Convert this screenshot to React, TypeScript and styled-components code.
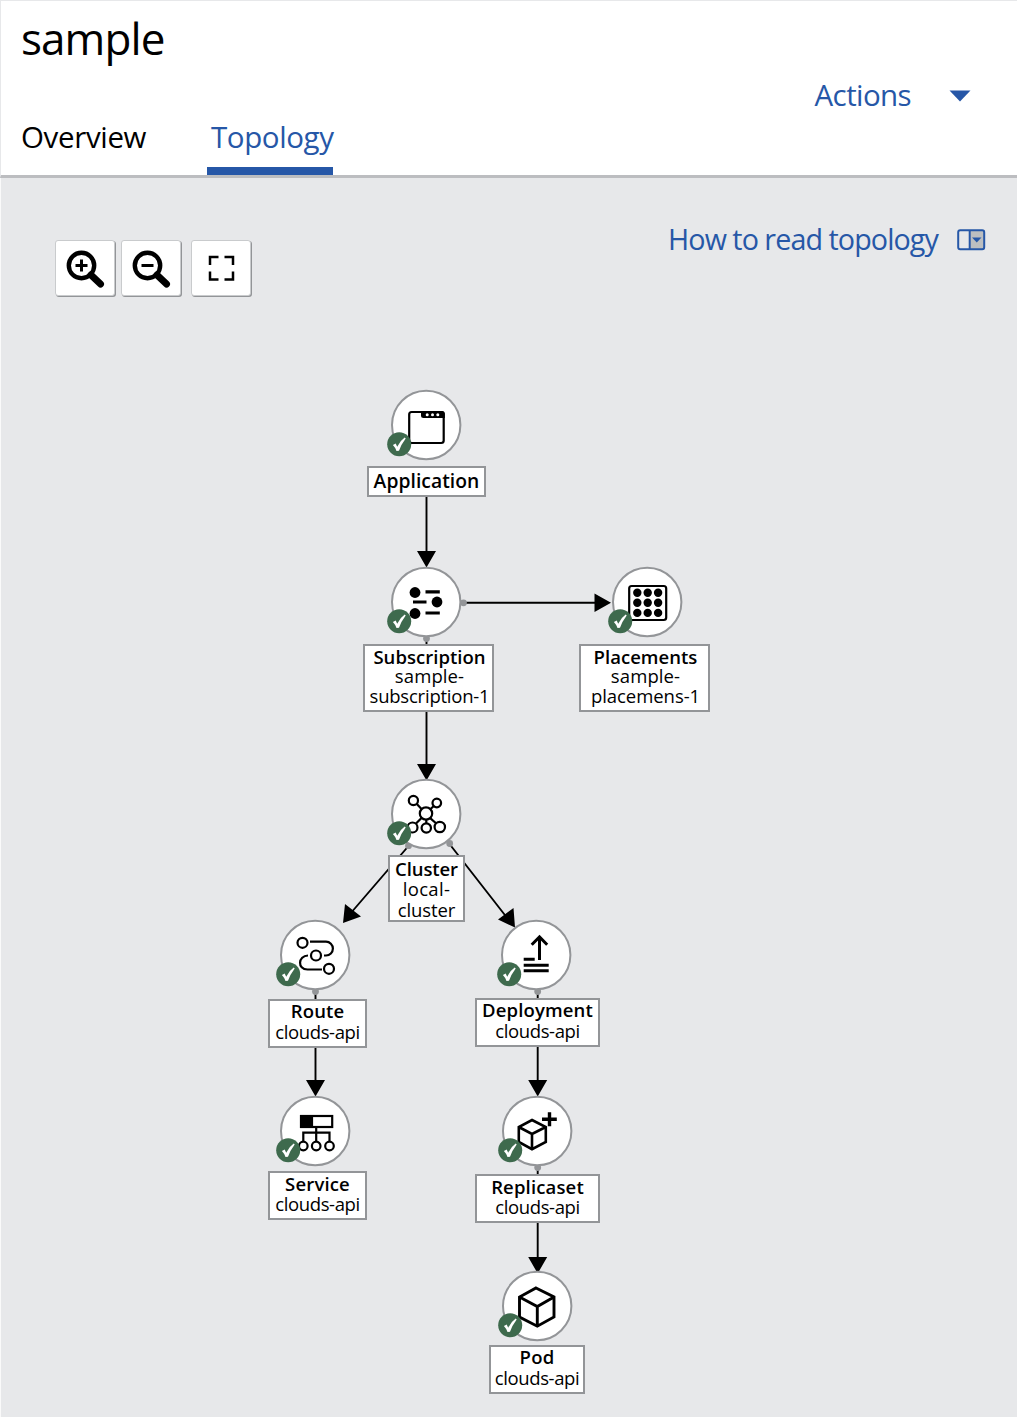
import React from 'react';
import styled, { createGlobalStyle } from 'styled-components';

const blue = '#2657a7';
const canvas = '#e7e8ea';
const rim = '#939598';
const green = '#3e6a4d';

const GlobalStyle = createGlobalStyle`
  * { box-sizing: border-box; }
  body { margin: 0; background: #fff; }
`;

const Page = styled.div`
  width: 1017px;
  height: 1418px;
  display: flex;
  flex-direction: column;
  font-family: 'Open Sans', 'Noto Sans', sans-serif;
  color: #000;
  overflow: hidden;
`;

const Header = styled.header`
  height: 178px;
  display: flex;
  justify-content: space-between;
  background: #fff;
  border-top: 1px solid ${canvas};
  border-left: 1px solid ${canvas};
  border-bottom: 3px solid #bcbdc0;
  padding: 5px 46px 0 20px;
`;

const HeadLeft = styled.div`
  display: flex;
  flex-direction: column;
`;

const Text = styled.span<{ $ls?: number; $ws?: number }>`
  letter-spacing: ${(p) => p.$ls ?? 0}px;
  word-spacing: ${(p) => p.$ws ?? 0}px;
  white-space: nowrap;
`;

const Title = styled.h1`
  margin: 0;
  font-weight: 400;
  font-size: 44px;
  line-height: 65px;
  height: 100px;
`;

const Tabs = styled.nav`
  display: flex;
  gap: 60px;
`;

const Tab = styled.a<{ $active?: boolean }>`
  height: 70px;
  width: 126px;
  padding-left: ${(p) => (p.$active ? 4 : 0)}px;
  font-size: 29.5px;
  line-height: 63px;
  white-space: nowrap;
  color: ${(p) => (p.$active ? blue : '#000')};
  box-shadow: ${(p) => (p.$active ? `inset 0 -8px ${blue}` : 'none')};
`;

const Actions = styled.button`
  display: flex;
  align-items: center;
  gap: 38px;
  align-self: flex-start;
  margin-top: 66px;
  height: 44px;
  padding: 0;
  border: 0;
  background: none;
  font: inherit;
  font-size: 29.5px;
  color: ${blue};
  svg { margin-top: 3px; }
`;

const Canvas = styled.main`
  position: relative;
  flex: none;
  height: 1239px;
  background: ${canvas};
  box-shadow: inset 1px 0 #fafafa;
`;

const TopRow = styled.div`
  display: flex;
  justify-content: space-between;
  padding: 38px 31px 0 55px;
`;

const Tools = styled.div`
  display: flex;
  padding-top: 24px;
  gap: 6px;
`;

const Tool = styled.button<{ $gap?: number }>`
  width: 60px;
  height: 56px;
  margin-left: ${(p) => p.$gap ?? 0}px;
  padding: 0;
  background: #fff;
  border: 1px solid #c9cbcd;
  border-radius: 3px;
  box-shadow: 1px 1px 0 #939598;
  svg { display: block; }
`;

const HelpLink = styled.a`
  display: flex;
  align-items: center;
  gap: 19px;
  height: 46px;
  font-size: 28.7px;
  line-height: 40px;
  color: ${blue};
  svg { margin-top: 1px; }
`;

const Edges = styled.svg`
  position: absolute;
  left: 0;
  top: -178px;
`;

const NodeIcon = styled.svg<{ $x: number; $y: number }>`
  position: absolute;
  left: ${(p) => p.$x - 41}px;
  top: ${(p) => p.$y - 36 - 178}px;
`;

const Label = styled.div<{ $x: number; $y: number; $w: number; $h: number; $lh: number; $pt: number; $pl: number }>`
  position: absolute;
  left: ${(p) => p.$x}px;
  top: ${(p) => p.$y - 178}px;
  width: ${(p) => p.$w}px;
  height: ${(p) => p.$h}px;
  padding-top: ${(p) => p.$pt}px;
  padding-left: ${(p) => p.$pl}px;
  display: flex;
  flex-direction: column;
  align-items: center;
  background: #fff;
  border: 2px solid ${rim};
  font-size: 18.5px;
  line-height: ${(p) => p.$lh}px;
`;

const Name = styled(Text)<{ $size?: number }>`
  font-weight: 600;
  font-size: ${(p) => p.$size ?? 18.5}px;
`;

const stroke = { fill: 'none', stroke: '#000', strokeWidth: 2.2 } as const;

const icons: Record<string, React.ReactNode> = {
  application: (
    <g>
      <rect x="-16.800" y="-13" width="34.500" height="31" rx="2.500" {...stroke} />
      <path d="M-5-14H16Q18.800-14 18.800-11V-7H-2.500Q-5-7-5-9.500Z" />
      <g fill="#fff"><circle cx="1.200" cy="-10.300" r="1.500" /><circle cx="6.500" cy="-10.300" r="1.500" /><circle cx="11.800" cy="-10.300" r="1.500" /></g>
    </g>
  ),
  subscription: (
    <g>
      <circle cx="-11" cy="-9.500" r="5.400" /><circle cx="11" cy="0" r="5.400" /><circle cx="-11" cy="11.500" r="5.400" />
      <path d="M-.5-10.200H13.800M-13 0H.5M-.5 11H13.800" stroke="#000" strokeWidth="3.200" />
    </g>
  ),
  placements: (
    <g>
      <rect x="-17.800" y="-16" width="37" height="34" rx="2.500" {...stroke} />
      {[-9.3, 0.7, 10.9].map((y) => [-9.7, 0.7, 11.1].map((x) => <circle key={`${x}${y}`} cx={x} cy={y} r="4.200" />))}
    </g>
  ),
  cluster: (
    <g {...stroke}>
      <circle cx="0" cy="-.5" r="6.200" /><circle cx="-12.600" cy="-13.500" r="4.600" /><circle cx="10.800" cy="-11" r="4.300" />
      <circle cx="-13.500" cy="13.500" r="5" /><circle cx=".3" cy="14" r="4.700" /><circle cx="13.800" cy="13" r="5.200" />
      <path d="M-9.400-10.200-4.500-5M7.800-8 4.300-4.800M-4.500 4-10 9.500M.3 6V9M4.200 4.200 10.300 9.500" />
    </g>
  ),
  route: (
    <g {...stroke}>
      <circle cx="-12.500" cy="-12.200" r="5" /><circle cx="1" cy=".5" r="5" /><circle cx="14" cy="13.800" r="5" />
      <path d="M-5-13.300H11A6.900 6.900 0 0 1 11 .5H9M-7 .5C-17 .5-18 14.500-7.500 14.500H7" />
    </g>
  ),
  deployment: (
    <path d="M3.500 5V-18M-4.300-10.200 3.500-18 11.200-10.200M-12.300 4.200H-1.300M-12.300 10.200H12.700M-12.300 15.700H12.700" fill="none" stroke="#000" strokeWidth="3" />
  ),
  service: (
    <g {...stroke}>
      <rect x="-13.800" y="-15" width="31" height="11" /><path d="M-14-15H-3V-4H-14Z" fill="#000" />
      <path d="M1.200-3V10M-11.700 11V1.700H14.500V11" />
      <circle cx="-11.700" cy="15" r="4.300" /><circle cx="1.200" cy="15" r="4.300" /><circle cx="14.500" cy="15" r="4.300" />
    </g>
  ),
  replicaset: (
    <g fill="none" stroke="#000">
      <path d="M-5-11 8.800-4V11L-5 18.200-18.200 11V-4ZM-18.200-4-5 3 8.800-4M-5 3V18" strokeWidth="2.600" />
      <path d="M12.500-18.800V-4.800M5-11.700H19.800" strokeWidth="3.400" />
    </g>
  ),
  pod: (
    <path d="M-1-18 17-9V11L.3 20.200-17.500 11V-9ZM-17.500-9 .3.500 17-9M.3.500V20.200" fill="none" stroke="#000" strokeWidth="2.900" />
  ),
};

type Line = [string, number];
interface NodeData {
  icon: string;
  x: number;
  y: number;
  box: [number, number, number, number];
  lh: number;
  pt: number;
  pl?: number;
  size?: number;
  name: Line;
  lines: Line[];
}

const nodes: NodeData[] = [
  { icon: 'application', x: 426, y: 425, box: [367, 466, 119, 31], lh: 20, pt: 3, size: 19.3, name: ['Application', 0.05], lines: [] },
  { icon: 'subscription', x: 426, y: 602, box: [363, 644, 131, 68], lh: 19.4, pt: 1, pl: 2, name: ['Subscription', 0.03], lines: [['sample-', 0.1], ['subscription-1', -0.22]] },
  { icon: 'placements', x: 647, y: 602, box: [579, 644, 131, 68], lh: 19.4, pt: 1, pl: 2, name: ['Placements', 0.03], lines: [['sample-', 0.1], ['placemens-1', -0.05]] },
  { icon: 'cluster', x: 426, y: 814, box: [388, 855, 77, 67], lh: 20.4, pt: 2, name: ['Cluster', -0.1], lines: [['local-', 0.3], ['cluster', -0.1]] },
  { icon: 'route', x: 315, y: 955, box: [268, 999, 99, 49], lh: 20.5, pt: 0, name: ['Route', 0.1], lines: [['clouds-api', -0.38]] },
  { icon: 'deployment', x: 536, y: 955, box: [475, 998, 125, 49], lh: 20.5, pt: 0, name: ['Deployment', 0.15], lines: [['clouds-api', -0.38]] },
  { icon: 'service', x: 315, y: 1131, box: [268, 1171, 99, 49], lh: 20, pt: 1, name: ['Service', 0.15], lines: [['clouds-api', -0.38]] },
  { icon: 'replicaset', x: 537, y: 1131, box: [475, 1174, 125, 49], lh: 20, pt: 1, name: ['Replicaset', 0.15], lines: [['clouds-api', -0.38]] },
  { icon: 'pod', x: 537, y: 1306, box: [489, 1345, 96, 49], lh: 20.5, pt: 0, name: ['Pod', 0.2], lines: [['clouds-api', -0.38]] },
];

function TopologyNode({ node }: { node: NodeData }) {
  const [bx, by, bw, bh] = node.box;
  return (
    <>
      <NodeIcon $x={node.x} $y={node.y} width="78" height="72" viewBox="-41 -36 78 72">
        <circle cx=".2" r="34.200" fill="#fff" stroke={rim} strokeWidth="2" />
        {icons[node.icon]}
        <circle cx="-26.800" cy="19.200" r="12" fill={green} />
        <path transform="translate(-26.800 19.200)" d="M-6.300.7-3.500-.6-2 2.500Q1-3.500 5.500-6.600L6.500-5.800Q2 0-.2 6.600L-2.700 6.800Q-4 3-6.300.7Z" fill="#fff" />
      </NodeIcon>
      <Label $x={bx} $y={by} $w={bw} $h={bh} $lh={node.lh} $pt={node.pt} $pl={node.pl ?? 0}>
        <Name $ls={node.name[1]} $size={node.size}>{node.name[0]}</Name>
        {node.lines.map(([t, ls]) => <Text key={t} $ls={ls}>{t}</Text>)}
      </Label>
    </>
  );
}

export default function App() {
  return (
    <Page>
      <GlobalStyle />
      <Header>
        <HeadLeft>
          <Title><Text $ls={-0.9}>sample</Text></Title>
          <Tabs>
            <Tab><Text $ls={-0.35}>Overview</Text></Tab>
            <Tab $active><Text $ls={-0.4}>Topology</Text></Tab>
          </Tabs>
        </HeadLeft>
        <Actions>
          <Text $ls={-0.6}>Actions</Text>
          <svg width="22" height="12" viewBox="0 0 22 12"><path d="M.5.500H21.500L11 11.500Z" fill={blue} /></svg>
        </Actions>
      </Header>
      <Canvas>
        <TopRow>
          <Tools>
            <Tool aria-label="Zoom in">
              <svg width="58" height="55" viewBox="1 0 58 55" fill="none" stroke="#000">
                <circle cx="26.500" cy="24.500" r="12.700" strokeWidth="4.400" />
                <path d="M36 34 45.500 43" strokeWidth="7" strokeLinecap="round" />
                <path d="M26.500 18.500V30.500M20.500 24.500H32.500" strokeWidth="3" />
              </svg>
            </Tool>
            <Tool aria-label="Zoom out">
              <svg width="58" height="55" viewBox="1 0 58 55" fill="none" stroke="#000">
                <circle cx="26.500" cy="24.500" r="12.700" strokeWidth="4.400" />
                <path d="M36 34 45.500 43" strokeWidth="7" strokeLinecap="round" />
                <path d="M20.500 24.500H32.500" strokeWidth="3" />
              </svg>
            </Tool>
            <Tool $gap={4} aria-label="Fit to screen">
              <svg width="58" height="55" viewBox="0 0 58 55" fill="none" stroke="#000" strokeWidth="2.500">
                <path d="M18 24V16H26.500M32.500 16H41V24M41 30.500V38.500H32.500M26.500 38.500H18V30.500" />
              </svg>
            </Tool>
          </Tools>
          <HelpLink>
            <Text $ls={-0.9} $ws={-0.2}>How to read topology</Text>
            <svg width="29" height="22" viewBox="0 0 29 22">
              <rect x="12.500" y="1" width="15" height="19.500" fill="#bcbec0" />
              <rect x="1.200" y="1.200" width="26" height="19" rx="2" fill="none" stroke={blue} strokeWidth="2" />
              <path d="M12.700 1V20.500" stroke={blue} strokeWidth="2" />
              <path d="M15 8.500H24.500L19.800 13.500Z" fill={blue} />
            </svg>
          </HelpLink>
        </TopRow>
        <Edges width="1017" height="1418" viewBox="0 0 1017 1418">
          <g stroke="#000" strokeWidth="1.900">
            <path d="M426.500 490V560M426.500 638V770M464 602.800H600M408.500 846 350 914M449.500 844 508 919M315.500 991V1085M537.700 991V1085M537.700 1167V1262" />
          </g>
          <path d="M417 551H436L426.500 567.500ZM417 764H436L426.500 780.500ZM594.500 593.500V612L611 602.800ZM345 904 361 916.500 343 923ZM498 919.500 513.500 908 515 927.500ZM306 1080H325L315.500 1096.500ZM528.200 1080H547.200L537.700 1096.500ZM528.200 1257H547.200L537.700 1273.500Z" />
          <g fill={rim}>
            <circle cx="426.500" cy="638.500" r="3.400" /><circle cx="463.500" cy="602.800" r="3.400" /><circle cx="408.500" cy="845.700" r="3.400" />
            <circle cx="449.700" cy="843.500" r="3.400" /><circle cx="315.500" cy="991.500" r="3.400" /><circle cx="537.700" cy="991.500" r="3.400" /><circle cx="537.700" cy="1167.500" r="3.400" />
          </g>
        </Edges>
        {nodes.map((n) => <TopologyNode key={n.icon} node={n} />)}
      </Canvas>
    </Page>
  );
}
